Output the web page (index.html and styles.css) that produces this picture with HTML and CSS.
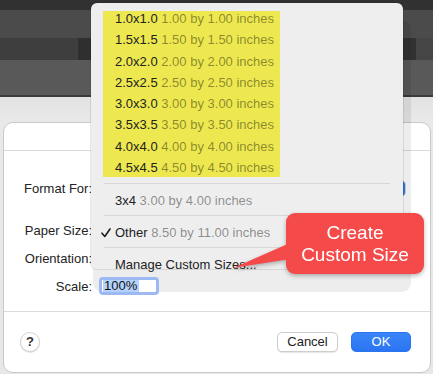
FILE: index.html
```
<!DOCTYPE html>
<html>
<head>
<meta charset="utf-8">
<link rel="stylesheet" href="styles.css">
</head>
<body>
<div class="screen">
  <div class="topbar">
    <div class="stripe s1"></div>
    <div class="stripe s2"></div>
    <div class="stripe s3">
      <span class="seg sa"></span><span class="seg sb"></span><span class="seg sc"></span><span class="seg sd"></span><span class="seg se"></span>
    </div>
    <div class="stripe s4"></div>
    <div class="stripe s5"></div>
  </div>
  <div class="backdrop">
    <div class="dialog">
      <div class="dlg-head"></div>
      <div class="dlg-body">
        <div class="row r-format"><span class="lbl">Format For:</span><div class="popup"><span class="popup-end"></span></div></div>
        <div class="row r-paper"><span class="lbl">Paper Size:</span></div>
        <div class="row r-small"><span class="lbl">Orientation:</span></div>
        <div class="row r-small"><span class="lbl">Scale:</span><div class="field"><span class="sel">100%</span></div></div>
      </div>
      <div class="dlg-foot">
        <button class="help">?</button>
        <div class="btns"><button class="btn cancel">Cancel</button><button class="btn ok">OK</button></div>
      </div>
    </div>
  </div>

  <div class="menu">
    <div class="group">
      <div class="item"><span class="name">1.0x1.0</span> <span class="dim">1.00 by 1.00 inches</span></div>
      <div class="item"><span class="name">1.5x1.5</span> <span class="dim">1.50 by 1.50 inches</span></div>
      <div class="item"><span class="name">2.0x2.0</span> <span class="dim">2.00 by 2.00 inches</span></div>
      <div class="item"><span class="name">2.5x2.5</span> <span class="dim">2.50 by 2.50 inches</span></div>
      <div class="item"><span class="name">3.0x3.0</span> <span class="dim">3.00 by 3.00 inches</span></div>
      <div class="item"><span class="name">3.5x3.5</span> <span class="dim">3.50 by 3.50 inches</span></div>
      <div class="item"><span class="name">4.0x4.0</span> <span class="dim">4.00 by 4.00 inches</span></div>
      <div class="item"><span class="name">4.5x4.5</span> <span class="dim">4.50 by 4.50 inches</span></div>
    </div>
    <div class="sep first"></div>
    <div class="item plain"><span class="name">3x4</span> <span class="dim">3.00 by 4.00 inches</span></div>
    <div class="sep"></div>
    <div class="item plain checked">
      <svg class="check" width="10" height="10" viewBox="0 0 10 10"><polyline points="1,5.2 3.8,8.5 9,1" fill="none" stroke="#1e1e1e" stroke-width="1.6" stroke-linecap="round" stroke-linejoin="round"/></svg>
      <span class="name">Other</span> <span class="dim">8.50 by 11.00 inches</span>
    </div>
    <div class="sep"></div>
    <div class="item plain"><span class="name">Manage Custom Sizes...</span></div>
  </div>

  <div class="callout">
    <svg class="tail" width="58" height="30" viewBox="0 0 58 30"><polygon points="1,27 58,2 58,18" fill="#f44a4a"/></svg>
    <span class="ctext">Create</span>
    <span class="ctext">Custom Size</span>
  </div>
</div>
</body>
</html>
```

FILE: styles.css
```
html, body {
  margin: 0;
  padding: 0;
}
body {
  font-family: "Liberation Sans", Arial, sans-serif;
  font-size: 13px;
  color: #232323;
}
.screen {
  position: relative;
  width: 433px;
  height: 374px;
  overflow: hidden;
  background: #e5e5e5;
}
.topbar {
  display: flex;
  flex-direction: column;
}
.stripe { width: 100%; }
.s1 { height: 10px; background: #313131; }
.s2 { height: 28px; background: #4b4b4b; }
.s3 { height: 22px; display: flex; }
.s3 .seg { display: block; height: 100%; }
.sa { width: 78px; background: #3e3e3e; }
.sb { width: 13px; background: #2f2f2f; }
.sc { width: 312px; background: #3e3e3e; }
.sd { width: 13px; background: #323232; }
.se { flex: 1; background: #454545; }
.s4 { height: 35px; background: #595959; }
.s5 { height: 2px; background: #3a3a3a; }

.backdrop {
  height: 277px;
  box-sizing: border-box;
  padding: 25px 2px 0 3px;
  background: linear-gradient(180deg, #e2e2e2 0, #e9e9e9 25px, #e7e7e7 100%);
}
.dialog {
  width: 428px;
  height: 251px;
  box-sizing: border-box;
  background: #ffffff;
  border: 1px solid #c9c9c9;
  border-radius: 10px;
  display: flex;
  flex-direction: column;
}
.dlg-head {
  height: 27px;
  border-bottom: 1px solid #dadada;
}
.dlg-body {
  height: 161px;
  box-sizing: border-box;
  padding-top: 27px;
  border-bottom: 1px solid #dcdcdc;
  display: flex;
  flex-direction: column;
}
.row {
  height: 20px;
  display: flex;
  align-items: center;
  gap: 7px;
}
.r-paper { margin-top: 22px; }
.r-small { margin-top: 8px; }
.lbl {
  width: 88px;
  text-align: right;
  color: #232323;
  white-space: nowrap;
}
.popup {
  width: 307px;
  height: 17px;
  box-sizing: border-box;
  background: #fff;
  border: 1px solid #cfcfcf;
  border-radius: 5px;
  display: flex;
  justify-content: flex-end;
}
.popup-end {
  width: 16px;
  height: 100%;
  background: #2f78f0;
  border-radius: 4px;
}
.field {
  position: relative;
  z-index: 3;
  width: 60px;
  height: 18px;
  box-sizing: border-box;
  border: 3px solid #9db9f3;
  border-radius: 4px;
  background: #fff;
  display: flex;
  align-items: center;
  padding-left: 1px;
}
.sel {
  display: inline-block;
  line-height: 12px;
  height: 12px;
  padding: 0 2px 0 1px;
  background: #b4d2fc;
  color: #111;
}
.dlg-foot {
  flex: 1;
  display: flex;
  justify-content: space-between;
  align-items: flex-start;
  padding: 20px 19px 0 16px;
}
.help {
  width: 20px;
  height: 20px;
  box-sizing: border-box;
  border-radius: 50%;
  border: 1px solid #d2d2d2;
  background: #fff;
  box-shadow: 0 1px 1px rgba(0,0,0,0.12);
  font-family: "Liberation Sans", Arial, sans-serif;
  font-size: 13px;
  font-weight: bold;
  color: #333;
  padding: 0;
  line-height: 18px;
}
.btns {
  display: flex;
  gap: 13px;
}
.btn {
  height: 20px;
  box-sizing: border-box;
  border-radius: 5px;
  font-family: "Liberation Sans", Arial, sans-serif;
  font-size: 13px;
  padding: 0;
  line-height: 18px;
}
.cancel {
  width: 61px;
  background: #fff;
  border: 1px solid #cdcdcd;
  box-shadow: 0 1px 1px rgba(0,0,0,0.1);
  color: #222;
}
.ok {
  width: 60px;
  background: linear-gradient(180deg, #3a86f8, #2a74f2);
  border: 1px solid #2b74ee;
  color: #fff;
}

/* menu overlay */
.menu {
  position: absolute;
  left: 91px;
  top: 3px;
  width: 312px;
  height: 266px;
  box-sizing: border-box;
  padding-top: 8px;
  background: #eeeeee;
  border-radius: 6px;
  box-shadow: 0 0 0 1px rgba(0,0,0,0.09), 5px 20px 0 3px rgba(0,0,0,0.07);
  z-index: 2;
}
.group {
  display: flow-root;
  margin-left: 12px;
  width: 177px;
  height: 166px;
  background: #ede84f;
}
.item {
  position: relative;
  white-space: nowrap;
  color: #222;
}
.group .item {
  height: 21.3px;
  line-height: 21.3px;
  padding-left: 12px;
}
.group .item:first-child { margin-top: -3px; }
.item.plain {
  height: 21px;
  line-height: 21px;
  padding-left: 24px;
}
.dim { color: rgba(0,0,0,0.43); }
.check {
  position: absolute;
  left: 10px;
  top: 6px;
}
.sep {
  height: 1px;
  background: #d7d7d7;
  margin: 4px 13px 6px 13px;
}
.sep.first { margin-top: 6px; }

/* callout */
.callout {
  position: absolute;
  left: 286px;
  top: 213px;
  width: 138px;
  height: 61px;
  box-sizing: border-box;
  background: #f44a4a;
  border-radius: 9px;
  color: #fff;
  font-size: 19px;
  line-height: 22px;
  display: flex;
  flex-direction: column;
  align-items: center;
  justify-content: center;
  z-index: 4;
  filter: drop-shadow(0 2px 2px rgba(0,0,0,0.28));
}
.tail {
  position: absolute;
  left: -54px;
  top: 28px;
}
.ctext { display: block; }
```
